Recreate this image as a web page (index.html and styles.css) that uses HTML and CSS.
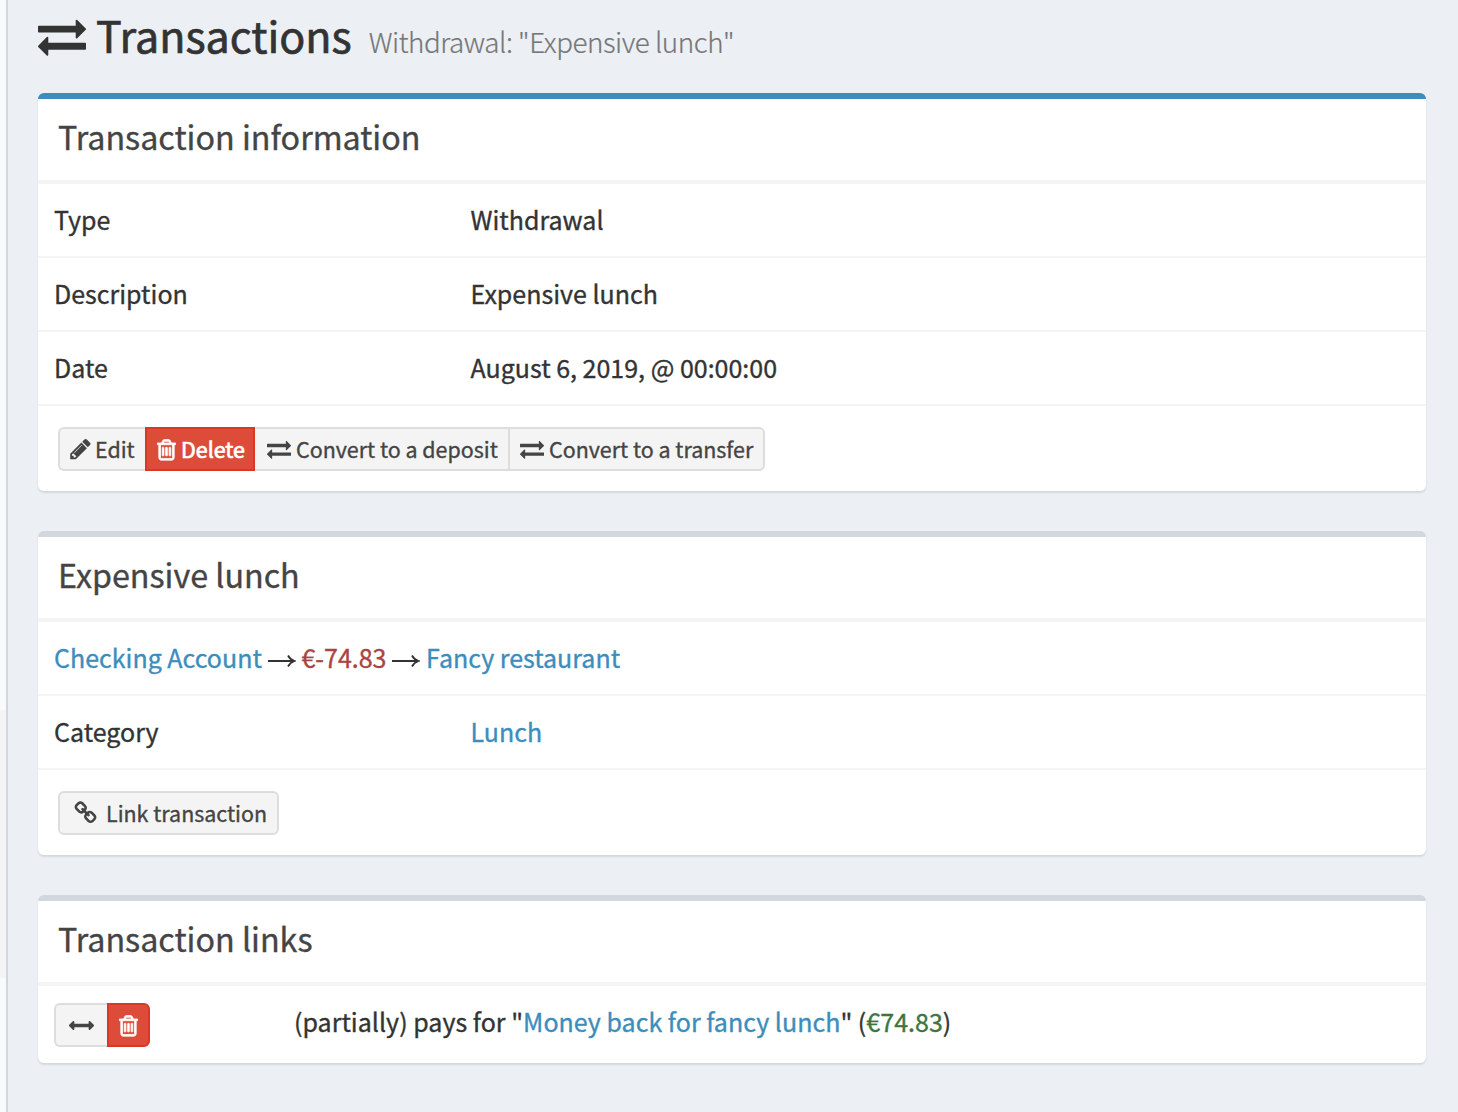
FILE: index.html
```html
<!DOCTYPE html>
<html lang="en">
<head>
<meta charset="utf-8">
<title>Transactions</title>
<link rel="stylesheet" href="styles.css">
</head>
<body>
<svg class="defs" aria-hidden="true">
  <symbol id="exchange" viewBox="0 0 1792 1792"><path d="M1792 1184v192q0 13-9.500 22.500t-22.500 9.500h-1376v192q0 13-9.500 22.500t-22.500 9.500q-12 0-24-10l-319-320q-9-9-9-22 0-14 9-23l320-320q9-9 23-9 13 0 22.500 9.500t9.500 22.500v192h1376q13 0 22.500 9.500t9.500 22.500zm0-544q0 14-9 23l-320 320q-9 9-23 9-13 0-22.500-9.500t-9.500-22.500v-192h-1376q-13 0-22.500-9.500t-9.500-22.500v-192q0-13 9.500-22.500t22.500-9.500h1376v-192q0-14 9-23t23-9q12 0 24 10l319 319q9 9 9 23z"/></symbol>
  <symbol id="pencil" viewBox="0 0 1536 1792"><path d="M363 1536l91-91-235-235-91 91v107h128v128h107zm523-928q0-22-22-22-10 0-17 7l-542 542q-7 7-7 17 0 22 22 22 10 0 17-7l542-542q7-7 7-17zm-54-192l416 416-832 832h-416v-416zm683 96q0 53-37 90l-166 166-416-416 166-165q36-38 90-38 53 0 91 38l235 234q37 39 37 91z"/></symbol>
  <symbol id="trash" viewBox="0 0 1408 1792"><path d="M512 800v576q0 14-9 23t-23 9h-64q-14 0-23-9t-9-23v-576q0-14 9-23t23-9h64q14 0 23 9t9 23zm256 0v576q0 14-9 23t-23 9h-64q-14 0-23-9t-9-23v-576q0-14 9-23t23-9h64q14 0 23 9t9 23zm256 0v576q0 14-9 23t-23 9h-64q-14 0-23-9t-9-23v-576q0-14 9-23t23-9h64q14 0 23 9t9 23zm128 724v-948h-896v948q0 22 7 40.500t14.500 27 10.500 8.500h832q3 0 10.500-8.500t14.500-27 7-40.500zm-672-1076h448l-48-117q-7-9-17-11h-317q-10 2-17 11zm928 32v64q0 14-9 23t-23 9h-96v948q0 83-47 143.500t-113 60.500h-832q-66 0-113-58.500t-47-141.500v-952h-96q-14 0-23-9t-9-23v-64q0-14 9-23t23-9h309l70-167q15-37 54-63t79-26h320q40 0 79 26t54 63l70 167h309q14 0 23 9t9 23z"/></symbol>
  <symbol id="link" viewBox="0 0 1664 1792"><path d="M1456 1216q0-40-28-68l-208-208q-28-28-68-28-42 0-72 32 3 3 19 18.500t21.500 21.500 15 19 13 25.500 3.500 27.500q0 40-28 68t-68 28q-15 0-27.500-3.500t-25.500-13-19-15-21.500-21.500-18.500-19q-33 31-33 73 0 40 28 68l206 207q27 27 68 27 40 0 68-26l147-146q28-28 28-67zm-703-705q0-40-28-68l-206-207q-28-28-68-28-39 0-68 27l-147 146q-28 28-28 67 0 40 28 68l208 208q27 27 68 27 42 0 72-31-3-3-19-18.500t-21.500-21.500-15-19-13-25.500-3.500-27.500q0-40 28-68t68-28q15 0 27.500 3.500t25.500 13 19 15 21.500 21.500 18.500 19q33-31 33-73zm895 705q0 120-85 203l-147 146q-83 83-203 83-121 0-204-85l-206-207q-83-83-83-203 0-123 88-209l-88-88q-86 88-208 88-120 0-204-84l-208-208q-84-84-84-204t85-203l147-146q83-83 203-83 121 0 204 85l206 207q83 83 83 203 0 123-88 209l88 88q86-88 208-88 120 0 204 84l208 208q84 84 84 204z"/></symbol>
  <symbol id="arrows" viewBox="0 0 1792 1792"><path d="M1792 896q0 26-19 45l-256 256q-19 19-45 19t-45-19-19-45v-128h-1024v128q0 26-19 45t-45 19-45-19l-256-256q-19-19-19-45t19-45l256-256q19-19 45-19t45 19 19 45v128h1024v-128q0-26 19-45t45-19 45 19l256 256q19 19 19 45z"/></symbol>
</svg>
<div class="sidebar"><div class="sidebar-item"></div></div>
<main class="content">
  <h1 class="page-title"><svg class="i-title"><use href="#exchange"/></svg><span>Transactions</span><small>Withdrawal: "Expensive lunch"</small></h1>

  <section class="box primary">
    <h2>Transaction information</h2>
    <div class="row"><span class="label">Type</span><span>Withdrawal</span></div>
    <div class="row"><span class="label">Description</span><span>Expensive lunch</span></div>
    <div class="row"><span class="label">Date</span><span>August 6, 2019, @ 00:00:00</span></div>
    <div class="footer">
      <div class="group">
        <a class="btn edit"><svg class="i-pencil"><use href="#pencil"/></svg>Edit</a>
        <a class="btn danger delete"><svg class="i-trash"><use href="#trash"/></svg>Delete</a>
        <a class="btn deposit"><svg class="i-ex"><use href="#exchange"/></svg>Convert to a deposit</a>
        <a class="btn transfer"><svg class="i-ex"><use href="#exchange"/></svg>Convert to a transfer</a>
      </div>
    </div>
  </section>

  <section class="box">
    <h2>Expensive lunch</h2>
    <div class="row flow"><a>Checking Account</a><svg class="to" viewBox="0 0 28 14"><path d="M0 7H26M20 1.500Q22 5.500 26.500 7Q22 8.500 20 12.500"/></svg><span class="neg">€-74.83</span><svg class="to" viewBox="0 0 28 14"><path d="M0 7H26M20 1.500Q22 5.500 26.500 7Q22 8.500 20 12.500"/></svg><a>Fancy restaurant</a></div>
    <div class="row"><span class="label">Category</span><a>Lunch</a></div>
    <div class="footer">
      <div class="group"><a class="btn linkbtn"><svg class="i-link"><use href="#link"/></svg>Link transaction</a></div>
    </div>
  </section>

  <section class="box">
    <h2>Transaction links</h2>
    <div class="row links">
      <div class="group actions">
        <a class="btn swap"><svg class="i-arrows"><use href="#arrows"/></svg></a>
        <a class="btn danger remove"><svg class="i-trash"><use href="#trash"/></svg></a>
      </div>
      <span class="link-text">(partially) pays for "<a>Money back for fancy lunch</a>" (<span class="pos">€74.83</span>)</span>
    </div>
  </section>
</main>
</body>
</html>
```
FILE: styles.css
```css
* { box-sizing: border-box; }
body {
  margin: 0;
  height: 1112px;
  display: flex;
  overflow: hidden;
  background: #ecf0f5;
  color: #333;
  font-family: "Noto Sans CJK SC", "Open Sans", sans-serif;
  font-size: 25px;
  line-height: 40px;
  -webkit-text-stroke: .35px currentColor;
}
svg { fill: currentColor; flex: none; }
.defs { display: none; }
a { color: #3c8dbc; }
.sidebar { width: 8px; flex: none; padding-top: 710px; background: #f9fafc; border-right: 2px solid #d2d6de; }
.sidebar-item { height: 268px; background: #f4f4f5; }
.content { flex: 1; padding: 0 32px 0 30px; }
.page-title { display: flex; height: 93px; margin: 0; font-size: 43px; font-weight: 400; line-height: 68px; white-space: nowrap; -webkit-text-stroke-width: .7px; }
.page-title small { margin-left: 17px; padding-top: 7px; color: #777; font-size: 27.800px; font-weight: 300; letter-spacing: -.480px; -webkit-text-stroke-width: .2px; }
.i-title { width: 48px; height: 48px; margin: 12px 10px 0 0; }
.box { margin-bottom: 40px; background: #fff; border-top: 6px solid #d2d6de; border-radius: 6px; box-shadow: 0 2px 2px rgba(0,0,0,.1); }
.primary { border-top-color: #3c8dbc; }
.box h2 { height: 85px; margin: 0; padding: 17px 20px 0; border-bottom: 4px solid #f4f4f4; color: #444; font-size: 32.250px; font-weight: 400; line-height: 40px; }
.row { display: flex; height: 74px; padding: 15px 16px 0; border-bottom: 2px solid #f4f4f4; white-space: nowrap; }
.label { width: 416.500px; }
.footer { height: 85px; padding: 21px 20px 0; }
.group { display: flex; }
.btn { display: flex; align-items: center; height: 44px; padding: 0 10px; background: #f4f4f4; border: 2px solid #ddd; color: #444; font-size: 21.450px; line-height: 40px; white-space: nowrap; }
.btn:first-child { border-radius: 6px 0 0 6px; }
.btn:last-child { border-radius: 0 6px 6px 0; }
.btn:only-child { border-radius: 6px; }
.btn.danger { background: #dd4b39; border-color: #d73925; color: #fff; -webkit-text-stroke-width: .7px; }
.edit { width: 87px; border-right: 0; }
.delete { width: 110px; }
.deposit { width: 255px; padding-left: 12px; border-left: 0; }
.transfer { width: 255px; border-left: 0; }
.linkbtn { width: 221px; padding-left: 14px; }
.i-pencil { width: 21px; height: 24px; margin-right: 4px; }
.i-trash { width: 19px; height: 24px; margin-right: 5px; stroke: currentColor; stroke-width: 60; }
.i-ex { width: 24px; height: 24px; margin-right: 5px; }
.i-link { width: 23px; height: 24px; margin-right: 9px; }
.to { width: 28px; height: 14px; margin: 17px 5.600px 0 6px; fill: none; stroke: #333; stroke-width: 1.800; }
.neg { color: #a94442; }
.pos { color: #3c763d; }
.links { height: 77px; padding-top: 17px; border: 0; }
.link-text { margin-top: -2px; letter-spacing: .020px; }
.actions { width: 240px; }
.swap { width: 53px; border-right: 0; padding-left: 13px; }
.remove { width: 43px; }
.i-arrows { width: 25px; height: 25px; }
```
